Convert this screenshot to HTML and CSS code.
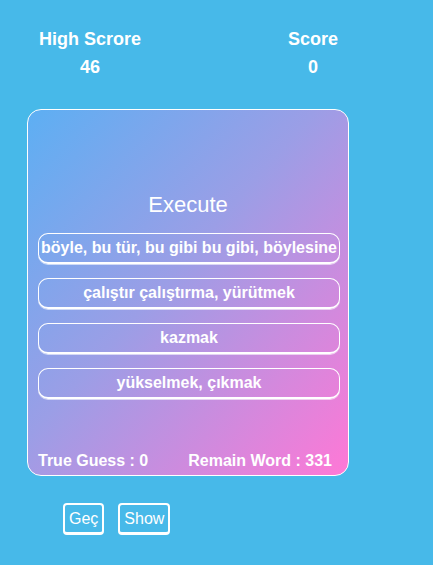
FILE: index.html
```html
<!DOCTYPE html>
<html>
<head>
<meta charset="utf-8">
<link rel="stylesheet" href="styles.css">
</head>
<body>
<div class="page">
  <div class="scores">
    <div class="score-col">
      <div class="score-label">High Scrore</div>
      <div class="score-value">46</div>
    </div>
    <div class="score-col">
      <div class="score-label">Score</div>
      <div class="score-value">0</div>
    </div>
  </div>
  <div class="card">
    <div class="word">Execute</div>
    <div class="answers">
      <button class="answer">böyle, bu tür, bu gibi bu gibi, böylesine</button>
      <button class="answer">çalıştır çalıştırma, yürütmek</button>
      <button class="answer">kazmak</button>
      <button class="answer">yükselmek, çıkmak</button>
    </div>
    <div class="stats">
      <span>True Guess : 0</span>
      <span>Remain Word : 331</span>
    </div>
  </div>
  <div class="controls">
    <button class="ctrl">Geç</button>
    <button class="ctrl">Show</button>
  </div>
</div>
</body>
</html>
```
FILE: styles.css
```css
html, body {
  margin: 0;
  padding: 0;
  background: #47b9e9;
  font-family: "Liberation Sans", Arial, sans-serif;
  color: #fff;
}
.page {
  width: 433px;
  height: 565px;
  box-sizing: border-box;
  padding-top: 29px;
}
.scores {
  display: flex;
  justify-content: space-between;
  width: 383px;
  padding-left: 10px;
}
.score-col {
  width: 160px;
  text-align: center;
  font-weight: bold;
  font-size: 18px;
}
.score-label {
  line-height: 21px;
}
.score-value {
  line-height: 21px;
  margin-top: 7px;
}
.card {
  margin-left: 27px;
  margin-top: 31px;
  width: 322px;
  height: 367px;
  box-sizing: border-box;
  border: 1px solid #fff;
  border-radius: 14px;
  background: linear-gradient(to bottom right, #5daff3 0%, #9b9ee6 45%, #ff78d6 100%);
  display: flex;
  flex-direction: column;
  padding: 82px 0 5px 0;
}
.word {
  text-align: center;
  font-size: 22px;
  line-height: 25px;
}
.answers {
  display: flex;
  flex-direction: column;
  gap: 14px;
  margin-top: 16px;
  padding-left: 10px;
}
.answer {
  width: 302px;
  height: 31px;
  box-sizing: border-box;
  background: transparent;
  border: 1px solid #fff;
  border-bottom-width: 2px;
  border-radius: 10px;
  box-shadow: 0 1px 0 rgba(255,255,255,0.6);
  color: #fff;
  font-family: "Liberation Sans", Arial, sans-serif;
  font-weight: bold;
  font-size: 16px;
  padding: 0;
  white-space: nowrap;
}
.stats {
  margin-top: auto;
  display: flex;
  gap: 40px;
  padding-left: 10px;
  font-weight: bold;
  font-size: 16px;
  line-height: 18px;
}
.controls {
  display: flex;
  gap: 14px;
  margin-top: 27px;
  padding-left: 63px;
}
.ctrl {
  height: 32px;
  box-sizing: border-box;
  background: transparent;
  border: 2px solid #fff;
  border-bottom-width: 3px;
  border-radius: 4px;
  color: #fff;
  font-family: "Liberation Sans", Arial, sans-serif;
  font-size: 16px;
  padding: 0 4px;
}
```
